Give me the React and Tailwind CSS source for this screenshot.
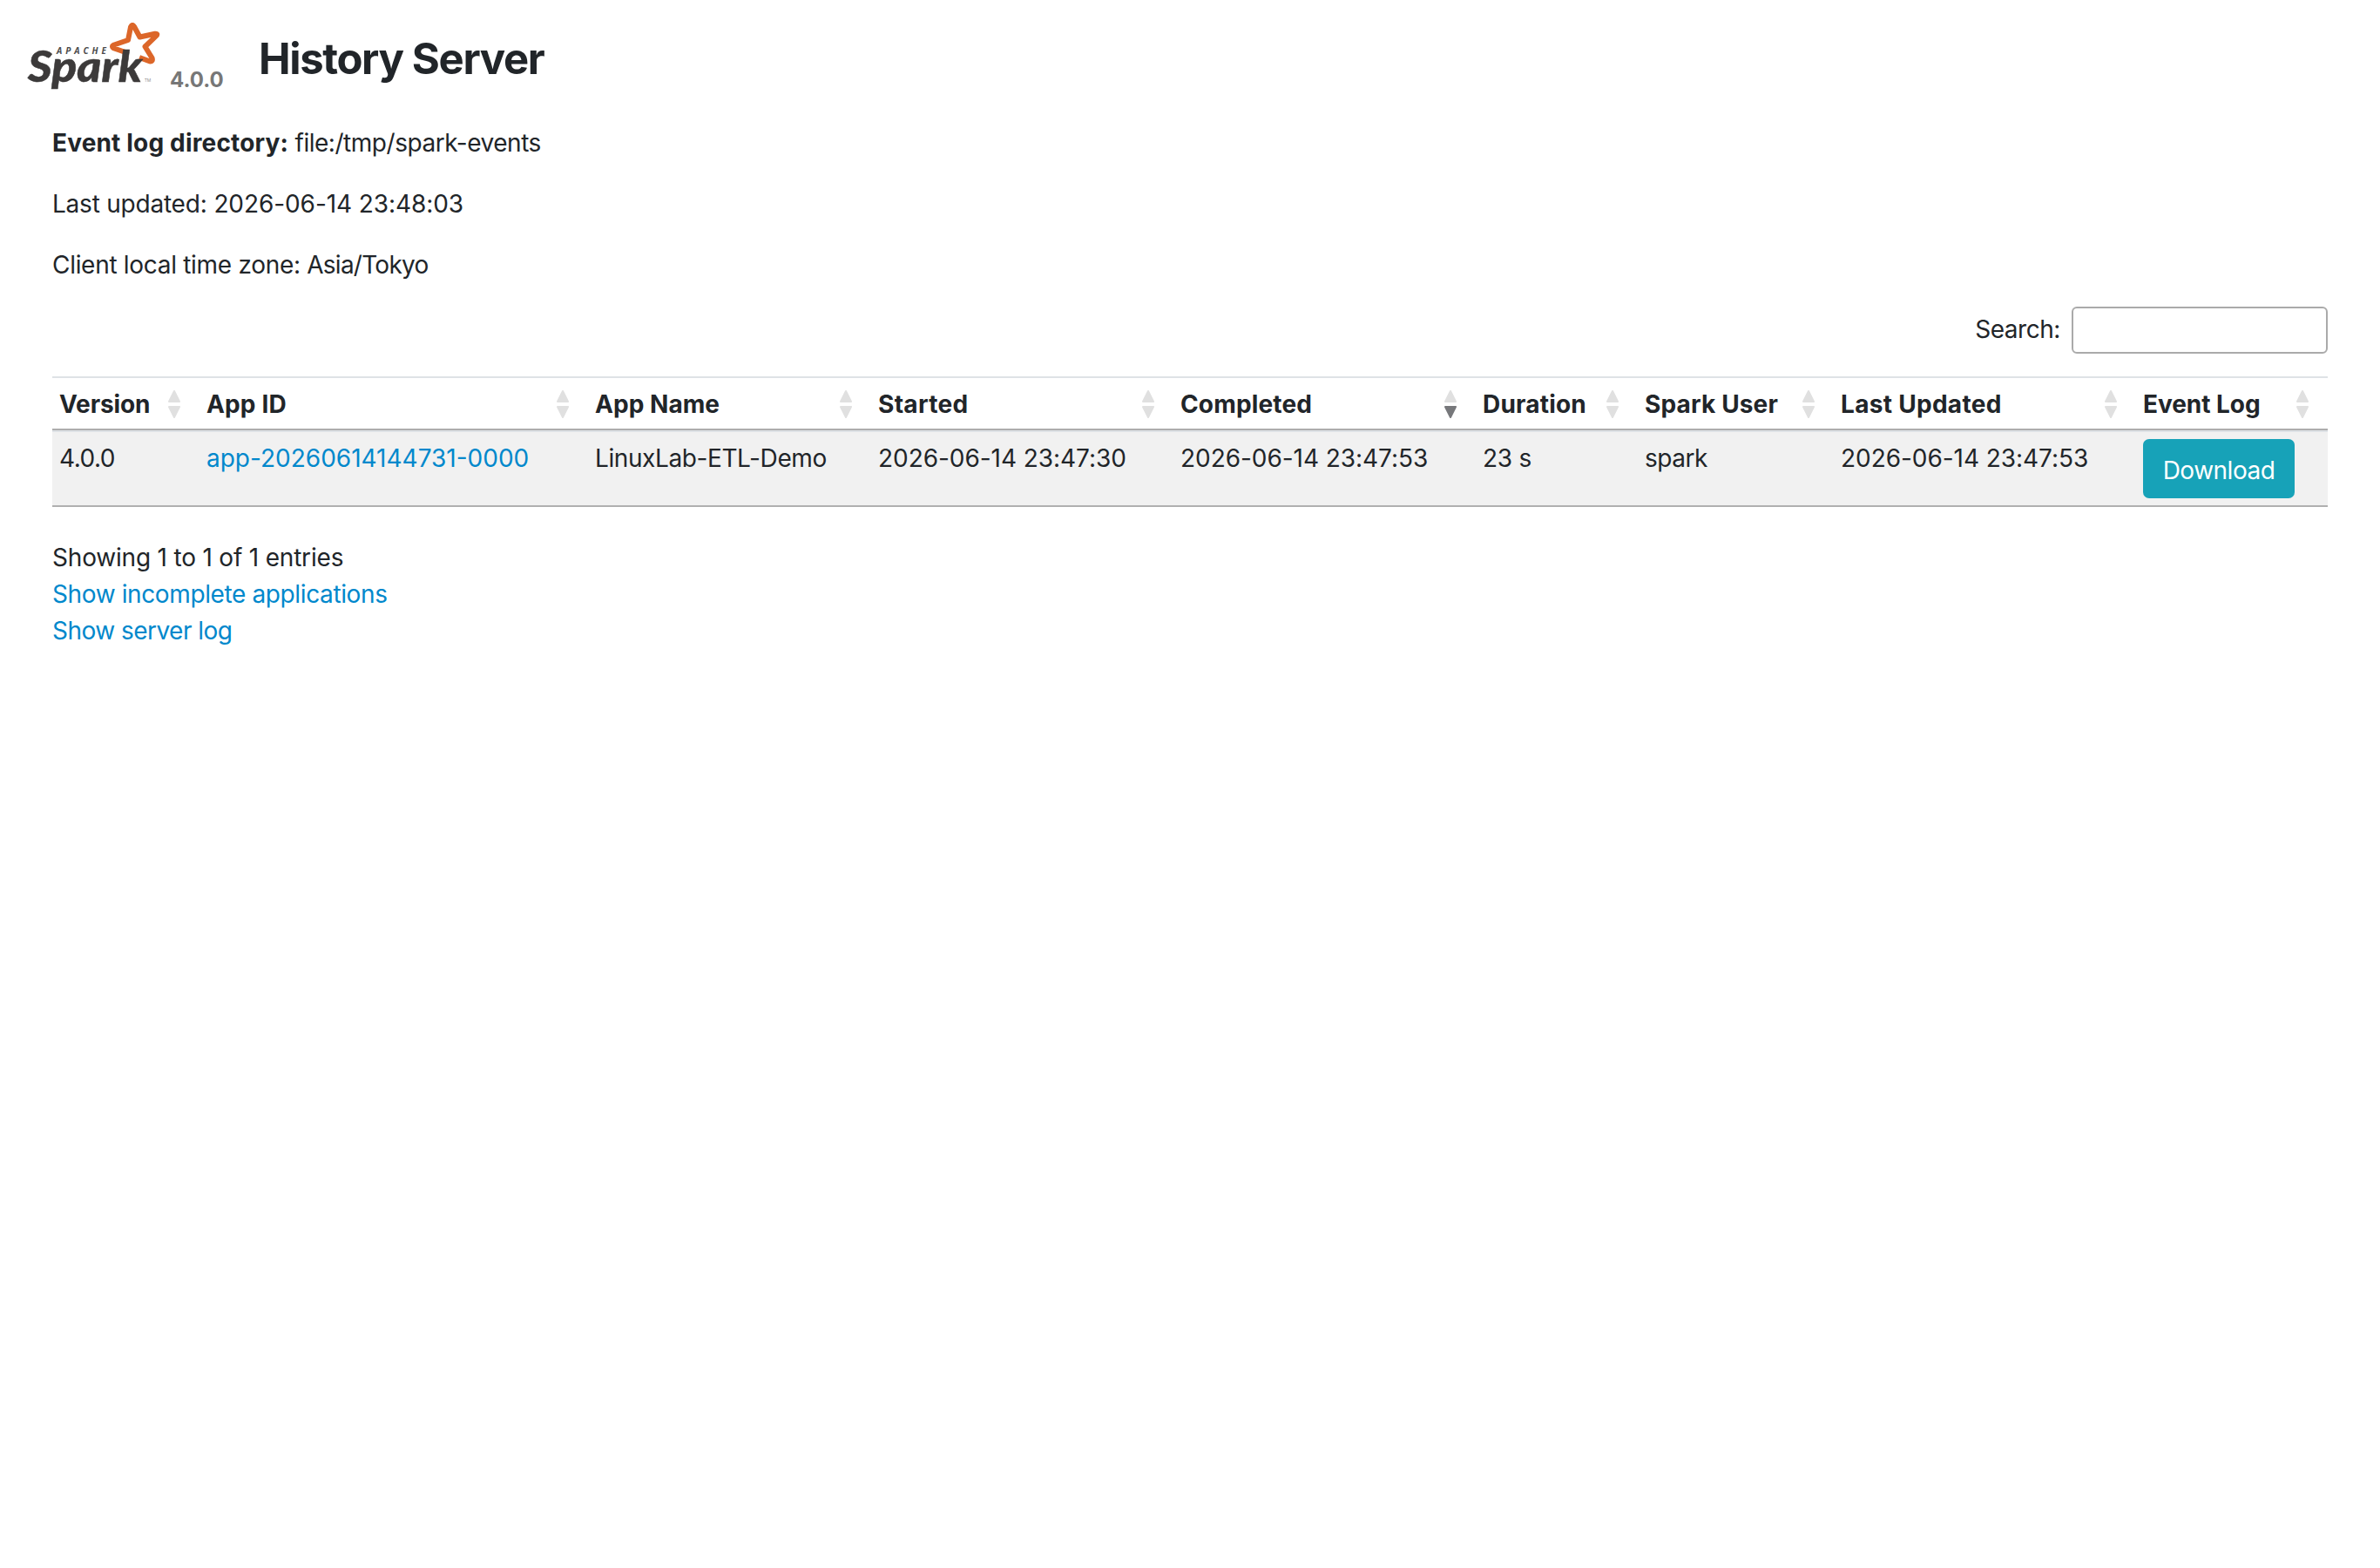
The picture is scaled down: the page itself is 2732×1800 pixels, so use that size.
import React from 'react';

const columns = [
  { label: 'Version', width: 'w-[169px]', tracking: 'tracking-[-0.1px]' },
  { label: 'App ID', width: 'w-[446px]', tracking: 'tracking-[0.15px]' },
  { label: 'App Name', width: 'w-[325px]', tracking: 'tracking-[0.05px]' },
  { label: 'Started', width: 'w-[347px]', tracking: 'tracking-[0.3px]' },
  { label: 'Completed', width: 'w-[347px]', tracking: 'tracking-[0.15px]', sort: 'desc' },
  { label: 'Duration', width: 'w-[186px]', tracking: 'tracking-[0.2px]' },
  { label: 'Spark User', width: 'w-[225px]', tracking: 'tracking-[0.15px]' },
  { label: 'Last Updated', width: 'w-[347px]', tracking: 'tracking-[0.3px]' },
  { label: 'Event Log', width: 'w-[220px]', tracking: 'tracking-[-0.05px]' },
];

const applications = [
  {
    version: '4.0.0',
    id: 'app-20260614144731-0000',
    name: 'LinuxLab-ETL-Demo',
    started: '2026-06-14 23:47:30',
    completed: '2026-06-14 23:47:53',
    duration: '23 s',
    user: 'spark',
    updated: '2026-06-14 23:47:53',
  },
];

const SparkLogo = () => (
  <svg className="block h-[84px] w-[160px]" viewBox="0 0 160 84" fill="none">
    <path
      d="M114 34 L101 29.500 Q97 27.500 101 25.500 L117 20 L120 5 Q121.800 1 124 4.500 L130.500 16.500 L148 12.700 Q152 12.500 149 15.500 L136.500 27.500 L144.500 40.500 Q146 45 141.500 44.300 L130 40"
      stroke="#dc6629"
      strokeWidth="6"
      strokeLinejoin="round"
    />
    <text x="35" y="35.700" textLength="57" fill="#4b4b4b" className="font-['Open_Sans',sans-serif] text-[10px] font-bold italic">
      APACHE
    </text>
    <text
      x="2"
      y="67.500"
      textLength="131"
      lengthAdjust="spacingAndGlyphs"
      fill="#3c3a3a"
      stroke="#3c3a3a"
      strokeWidth="0.5"
      strokeLinejoin="round"
      className="font-['Lato',sans-serif] text-[49px] font-black italic"
    >
      Spark
    </text>
    <text x="136" y="67.500" fill="#8a8a8a" className="font-['Open_Sans',sans-serif] text-[5px]">
      TM
    </text>
  </svg>
);

const SortIcon = ({ sort }) => (
  <svg className="h-[34px] w-4 shrink-0" viewBox="0 0 16 34">
    <path d="M8 2 L14 14 H2 Z" fill="#e0e0e0" stroke="#e0e0e0" strokeWidth="2" strokeLinejoin="round" />
    <path
      d="M8 32 L14 20 H2 Z"
      fill={sort === 'desc' ? '#77787b' : '#e0e0e0'}
      stroke={sort === 'desc' ? '#77787b' : '#e0e0e0'}
      strokeWidth="2"
      strokeLinejoin="round"
    />
  </svg>
);

const App = () => {
  return (
    <div className="min-h-screen w-full bg-white font-['Inter','Liberation_Sans',sans-serif] text-[28px] leading-[42px] text-[#212529]">
      <header className="flex h-[143px] items-start pl-[30px] pt-[26px]">
        <SparkLogo />
        <span className="ml-[5px] mt-[45px] w-[102px] text-[24px] font-bold text-[#777777]">4.0.0</span>
        <h1 className="text-[49px] font-bold leading-[84px] tracking-[-1.35px]">History Server</h1>
      </header>

      <main className="px-[60px]">
        <div className="flex flex-col gap-7">
          <p className="tracking-[-0.47px]">
            <strong className="font-bold tracking-[0.17px]">Event log directory:</strong> file:/tmp/spark-events
          </p>
          <p>
            <span className="tracking-[-0.22px]">Last updated:</span>{' '}
            <span className="tracking-[-0.08px]">2026-06-14 23:48:03</span>
          </p>
          <p>
            <span className="tracking-[-0.3px]">Client local time zone: </span>
            <span className="tracking-[-0.75px]">Asia/Tokyo</span>
          </p>
        </div>

        <label className="mt-[27px] flex h-[54px] items-center justify-end gap-[13px]">
          <span className="-mt-0.5 tracking-[-0.45px]">Search:</span>
          <input type="text" className="h-[54px] w-[294px] rounded-[6px] border-2 border-[#aaaaaa] bg-white px-2" />
        </label>

        <table className="mt-[26px] w-[2612px] table-fixed border-separate border-spacing-0 border-b-2 border-[#b0b0b0]">
          <thead>
            <tr className="h-[62px]">
              {columns.map((col) => (
                <th
                  key={col.label}
                  className={`${col.width} border-b-2 border-t-2 border-b-[#adadad] border-t-[#dee2e6] p-0 text-left font-bold`}
                >
                  <div className="flex items-center justify-between pl-2 pr-[21px] pt-0.5">
                    <span className={col.tracking}>{col.label}</span>
                    <SortIcon sort={col.sort} />
                  </div>
                </th>
              ))}
            </tr>
          </thead>
          <tbody>
            {applications.map((app) => (
              <tr
                key={app.id}
                className="h-[86px] bg-[#f1f1f1] align-top *:border-t-2 *:border-[#dee2e6] *:pl-2 *:pt-[9px]"
              >
                <td className="tracking-[-0.5px]">{app.version}</td>
                <td>
                  <a href="#" className="text-[#0088cc]">{app.id}</a>
                </td>
                <td className="tracking-[-0.4px]">{app.name}</td>
                <td className="tracking-[-0.05px]">{app.started}</td>
                <td className="tracking-[-0.05px]">{app.completed}</td>
                <td className="tracking-[-0.25px]">{app.duration}</td>
                <td className="tracking-[-0.5px]">{app.user}</td>
                <td className="tracking-[-0.05px]">{app.updated}</td>
                <td>
                  <a
                    href="#"
                    className="-mt-px flex h-[68px] w-[174px] items-center justify-center rounded-[7px] bg-[#17a2b8] pt-1 tracking-[-0.5px] text-white"
                  >
                    Download
                  </a>
                </td>
              </tr>
            ))}
          </tbody>
        </table>

        <footer className="mt-[37px] flex flex-col items-start">
          <p className="tracking-[-0.19px]">Showing 1 to 1 of 1 entries</p>
          <a href="#" className="tracking-[-0.38px] text-[#0088cc]">Show incomplete applications</a>
          <a href="#" className="tracking-[-0.53px] text-[#0088cc]">Show server log</a>
        </footer>
      </main>
    </div>
  );
};

export default App;
